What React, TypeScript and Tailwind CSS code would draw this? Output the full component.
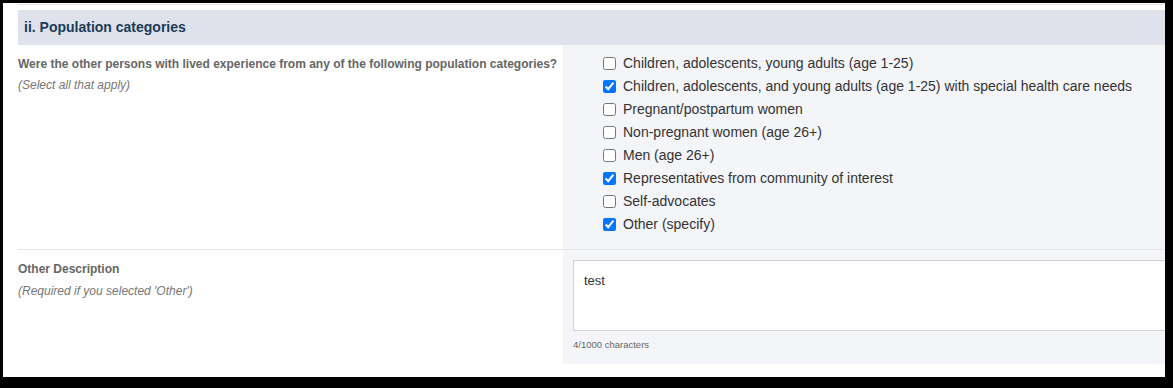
import React, { useState } from 'react';

const options = [
  { label: 'Children, adolescents, young adults (age 1-25)', checked: false },
  {
    label:
      'Children, adolescents, and young adults (age 1-25) with special health care needs',
    checked: true
  },
  { label: 'Pregnant/postpartum women', checked: false },
  { label: 'Non-pregnant women (age 26+)', checked: false },
  { label: 'Men (age 26+)', checked: false },
  { label: 'Representatives from community of interest', checked: true },
  { label: 'Self-advocates', checked: false },
  { label: 'Other (specify)', checked: true }
];

const App: React.FC = () => {
  const [description, setDescription] = useState('test');

  return (
    <div className="w-[1173px] h-[388px] bg-black pt-[3px] pl-[3px] pr-[8px] pb-[11px] font-['Liberation_Sans',Arial,sans-serif]">
      <div className="h-full bg-white overflow-hidden pt-[1px]">
        <div className="ml-[15px] border-t border-[#e3e5ea]" />

        {/* Section header */}
        <div className="mt-[5px] ml-[15px] w-[1200px] h-[35px] bg-[#dfe2ea] flex items-center px-[6px]">
          <h3 className="text-[14px] font-bold text-[#1b3a5a]">
            ii. Population categories
          </h3>
        </div>

        {/* Population categories */}
        <div className="ml-[15px] w-[1200px] flex border-b border-[#e5e5e5]">
          <div className="w-[545px] shrink-0 pt-[10px]">
            <p className="text-[12px] font-bold text-[#666]">
              Were the other persons with lived experience from any of the
              following population categories?
            </p>
            <p className="mt-[3px] text-[12px] italic text-[#777]">
              (Select all that apply)
            </p>
          </div>
          <div className="flex-1 bg-[#f4f5f9] pt-[7px] pb-[13px]">
            <ul className="pl-[36px] flex flex-col">
              {options.map((opt) => (
                <li key={opt.label} className="h-[23px] flex items-center">
                  <label className="flex items-center gap-[4px] text-[14px] text-[#333]">
                    <input
                      type="checkbox"
                      defaultChecked={opt.checked}
                      className="w-[13px] h-[13px] m-[3px_3px_3px_4px]"
                    />
                    {opt.label}
                  </label>
                </li>
              ))}
            </ul>
          </div>
        </div>

        {/* Other description */}
        <div className="ml-[15px] w-[1200px] flex">
          <div className="w-[545px] shrink-0 pt-[10px]">
            <p className="text-[12px] font-bold text-[#666]">Other Description</p>
            <p className="mt-[4px] text-[12px] italic text-[#777]">
              (Required if you selected 'Other')
            </p>
          </div>
          <div className="flex-1 bg-[#f4f5f9] pt-[10px] pl-[10px] pb-[12px]">
            <textarea
              value={description}
              onChange={(e) => setDescription(e.target.value)}
              className="block w-[700px] h-[71px] bg-white border border-[#cfd1d6] px-[10px] py-[10px] text-[13px] text-[#333] resize-none outline-none"
            />
            <p className="mt-[7px] text-[9.5px] text-[#666]">
              {description.length}/1000 characters
            </p>
          </div>
        </div>
      </div>
    </div>
  );
};

export default App;
